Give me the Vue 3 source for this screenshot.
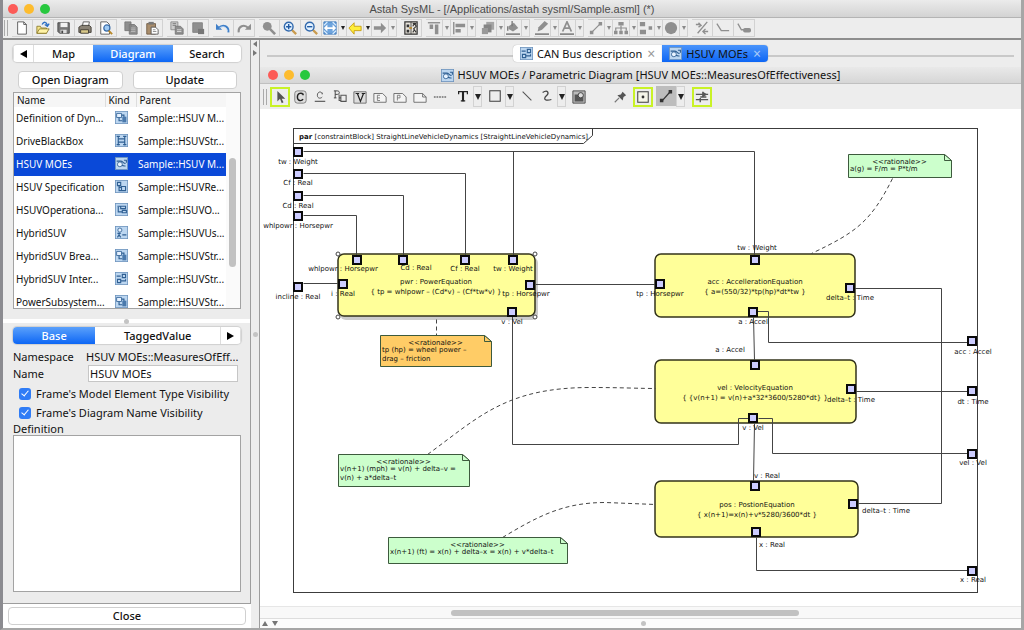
<script setup>
import { ref } from 'vue'

const blueTile = '<rect x=".5" y=".5" width="15" height="15" fill="#bcd6f0" stroke="#6d93bd"/>'
const tile = (d, extra = '') => `${blueTile}<path d="${d}" fill="none" stroke="#2f5f92" stroke-width="1.4"/>${extra}`
const gray = '#8f8f8f'

const icons = {
  new: '<path d="M3 1h7l3 3v11H3z" fill="#fff" stroke="#555"/><path d="M10 1v3h3" fill="none" stroke="#555"/>',
  open: '<path d="M1 14V6h4l1 2h6v6z" fill="#f5e58a" stroke="#8d7c2d"/><path d="M1 14l3-5h11l-3 5z" fill="#fff3a6" stroke="#8d7c2d"/><path d="M7 4c2-4 5-3 6 1M10 4l3 2 2-3" fill="none" stroke="#2c6fc4" stroke-width="1.6"/>',
  save: '<path d="M1 2h13v12H3l-2-2z" fill="#777" stroke="#444"/><path d="M4 2h8v5H4z" fill="#f2f2f2"/><path d="M4 10h7v4H4z" fill="#ddd"/><path d="M5 11h2v3H5z" fill="#444"/>',
  print: '<path d="M5 6l1-5h7l-1 5" fill="#fff" stroke="#555"/><path d="M1 7l3-2h9l2 2v6H1z" fill="#8a8376" stroke="#3c3831"/><path d="M3 10h9v4H3z" fill="#d9c98a" stroke="#3c3831"/>',
  preview: '<path d="M2 1h7l3 3v11H2z" fill="#fff" stroke="#555"/><circle cx="9" cy="8" r="3.5" fill="#9fcbf5" stroke="#3a6ca8" stroke-width="1.4"/><path d="M11 11l4 4" stroke="#b8892b" stroke-width="2.2"/>',
  copyGray: `<path d="M1 1h7v10H1zM6 4h6l3 3v8H6z" fill="${gray}" stroke="#777"/><path d="M8 8h5M8 10h5M8 12h5" stroke="#bbb"/>`,
  paste: '<path d="M2 3h10v12H2z" fill="#a98d6c" stroke="#705a44"/><path d="M4 1h6v3H4z" fill="#777"/><path d="M7 7h5l3 3v5H7z" fill="#fff" stroke="#555"/><path d="M9 10h3M9 12h4" stroke="#888"/>',
  copyStyle: `<path d="M1 1h8v9H1z" fill="#ccc" stroke="#888"/><path d="M3 3h4M3 5h4" stroke="#777"/><path d="M6 6h6l3 3v6H6z" fill="${gray}" stroke="#777"/><path d="M8 10h5M8 12h5" stroke="#ddd"/>`,
  pasteStyle: `<path d="M2 2h11v11H2z" fill="${gray}" stroke="#808080"/><path d="M8 9h7v6H8z" fill="#777"/>`,
  undo: '<path d="M14 13c1-7-6-10-11-5" fill="none" stroke="#3f7fc8" stroke-width="2.4"/><path d="M0 3v7h7z" fill="#3f7fc8"/><path d="M13 12c0-5-5-7-9-4" fill="none" stroke="#cfe4fa"/>',
  redo: `<path d="M2 13C1 6 8 3 13 8" fill="none" stroke="${gray}" stroke-width="2.4"/><path d="M16 3v7H9z" fill="${gray}"/>`,
  find: `<circle cx="6" cy="6" r="5" fill="${gray}"/><path d="M9 9l6 6" stroke="${gray}" stroke-width="3"/>`,
  zoomIn: '<path d="M10 10l5 5" stroke="#c99b4e" stroke-width="2.6"/><circle cx="6.500" cy="6.500" r="5" fill="#e2f1ff" stroke="#3269ad" stroke-width="1.6"/><path d="M3.500 6.500h6M6.500 3.500v6" stroke="#205ba5" stroke-width="1.600"/>',
  zoomOut: '<path d="M10 10l5 5" stroke="#c99b4e" stroke-width="2.6"/><circle cx="6.500" cy="6.500" r="5" fill="#e2f1ff" stroke="#3269ad" stroke-width="1.6"/><path d="M3.500 6.500h6" stroke="#205ba5" stroke-width="1.600"/>',
  fit: '<path d="M1 1h14v14H1z" fill="#6ea4dd" stroke="#3a76b8"/><path d="M1 5l4-4M11 1l4 4M1 11l4 4M11 15l4-4" stroke="#dff0ff" stroke-width="1.400"/><path d="M1 8l4-4v3h6V4l4 4-4 4V9H5v3z" fill="#fff"/>',
  back: '<path d="M1 8l6-6v4h8v5H7v4z" fill="#ffee3a" stroke="#c59b13"/>',
  forward: `<path d="M15 8L9 2v4H1v4h8v4z" fill="${gray}"/>`,
  map: '<path d="M1 1h14v14H1z" fill="#e8e4dc" stroke="#333" stroke-width="1.4"/><path d="M8 1v14" stroke="#444"/><path d="M3 4h3v3H3zM3 10h3v3H3z" fill="#333"/><path d="M10 6l2-3 2 3-3 3 3 4M10 13l2-3M10 3h4" fill="none" stroke="#333" stroke-width="1.200"/><path d="M6 8h3" stroke="#b8892b" stroke-width="2"/>',
  alignTop: `<path d="M1 2h14" stroke="${gray}" stroke-width="1.600"/><path d="M3 4h4v5H3zM9 4h4v11H9z" fill="${gray}"/>`,
  alignLeft: `<path d="M2 1v14" stroke="${gray}" stroke-width="1.600"/><path d="M4 3h11v4H4zM4 9h6v4H4z" fill="${gray}"/>`,
  depth: '<path d="M6 1h9v9H6z" fill="#a5a5a5"/><path d="M3 4h9v9H3z" fill="#858585"/><path d="M1 8h7v7H1z" fill="#999"/>',
  fill: `<path d="M3 6l6-4 5 6-6 4-5-3z" fill="${gray}"/><path d="M7 0v6M2 6v5" stroke="#777" stroke-width="1.500"/><path d="M0 15h16" stroke="#888" stroke-width="2"/>`,
  pen: `<path d="M3 12l1-5 7-7 4 3-7 7z" fill="${gray}"/><path d="M0 15h16" stroke="#888" stroke-width="2"/>`,
  fontColor: `<path d="M3 12L8 1l5 11M5 8h6" fill="none" stroke="${gray}" stroke-width="2"/><path d="M0 15h16" stroke="#888" stroke-width="2"/>`,
  lineStyle: `<path d="M3 13L13 3" stroke="${gray}" stroke-width="1.500"/><path d="M1 11h4v4H1zM11 1h4v4h-4z" fill="${gray}"/>`,
  tree: `<path d="M5 1h6v4H5zM0 11h4v4H0zM6 11h4v4H6zM12 11h4v4h-4z" fill="${gray}"/><path d="M8 5v6M2 11V8h12v3" fill="none" stroke="${gray}" stroke-width="1.400"/>`,
  arrange: `<path d="M1 1h6v5H1zM1 10h7v5H1zM11 6h4v4h-4z" fill="${gray}"/>`,
  disc: `<circle cx="8" cy="8" r="7" fill="${gray}"/>`,
  cut: `<path d="M14 1L3 14M1 4h5M9 12h6M4 2l3 3-3 2M12 9l-3 3 3 3" fill="none" stroke="${gray}" stroke-width="1.500"/>`,
  link: `<path d="M1 3l5 8h9" fill="none" stroke="${gray}" stroke-width="1.500"/>`,
  linkNote: `<path d="M1 3l4 7h4" fill="none" stroke="${gray}" stroke-width="1.500"/><rect x="7" y="8" width="9" height="5" rx="2" fill="${gray}"/>`,
  select: '<path d="M5 1v12l3-3 2 5 2-1-2-4h4z" fill="#555"/>',
  constraint: '<rect x="2" y="1" width="13" height="14" rx="3" fill="#ddd" stroke="#777"/><path d="M11.500 6V4M11.500 5C10 3 5 3 5 8s5 5 6.500 2.500" fill="none" stroke="#222" stroke-width="1.600"/>',
  constraintLine: '<path d="M10.500 5V3M10.500 4C9 1 5 2 5 6s4 4 5.500 2" fill="none" stroke="#555" stroke-width="1.100"/><path d="M2 13h12" stroke="#666" stroke-width="1.500"/>',
  port: '<path d="M1 9h3M2.500 9V1M1 1h4c3 0 3 4 0 4H2.500" fill="none" stroke="#444" stroke-width="1.100"/><path d="M9 9H7V5M7 9v3h2M9 6h6v7H9z" fill="none" stroke="#555" stroke-width="1.200"/>',
  value: '<path d="M1 2h14v13H1z" fill="#ddd" stroke="#666"/><path d="M5 4l3.500 9L12 4M3 4h4M10 4h4" fill="none" stroke="#222" stroke-width="1.400"/>',
  noteE: '<path d="M1 4h10l4 4v6H1z" fill="#f4f4f4" stroke="#666"/><path d="M8 6H5v6h3M5 9h3" fill="none" stroke="#777"/>',
  noteP: '<path d="M1 4h10l4 4v6H1z" fill="#f4f4f4" stroke="#666"/><path d="M5 12V6h3v3H5" fill="none" stroke="#777"/>',
  note: '<path d="M1 4h10l4 4v6H1z" fill="#f4f4f4" stroke="#666"/><path d="M11 4v4h4" fill="none" stroke="#666"/>',
  dotted: '<path d="M1 8h14" stroke="#333" stroke-width="1.400" stroke-dasharray="2 1"/>',
  text: '<path d="M3 6V3h10v3M5.500 13.500h5" fill="none" stroke="#222" stroke-width="1.400"/><path d="M8 3v11" stroke="#222" stroke-width="2.400"/>',
  rect: '<rect x="2" y="2" width="12" height="12" fill="#eee" stroke="#444" stroke-width="1.200"/>',
  line: '<path d="M3 3l10 10" stroke="#555" stroke-width="1.200"/>',
  curve: '<path d="M3 4c6-4 8 1 4 4-4 4 0 6 6 4" fill="none" stroke="#444" stroke-width="1.400"/>',
  image: '<path d="M1 1h14v14H1z" fill="#bbb" stroke="#444"/><path d="M3 13V5h4l1 4 5-2v6z" fill="#555"/><circle cx="10" cy="6" r="3" fill="#ddd" stroke="#333"/>',
  pin: '<path d="M2 14l5-5" stroke="#777" stroke-width="1.300"/><path d="M5 6l4-1 2-3 4 4-3 2-1 4z" fill="#555"/>',
  pointBox: '<rect x="2" y="2" width="12" height="12" fill="#f5f5e8" stroke="#444" stroke-width="1.200"/><circle cx="8" cy="8" r="1.600" fill="#333"/>',
  connector: '<path d="M4 13L12 4" stroke="#333" stroke-width="1.400"/><path d="M1 11h4v4H1zM11 1h4v4h-4z" fill="#333"/>',
  merge: '<path d="M1 5h14M1 11h14M6 8h7M9 2v6M6 9v5" stroke="#555" stroke-width="1.600"/><path d="M9 2l5 3-5 3z" fill="#555"/>',
  bdd: tile('M8 5h3v4M5 7v5h4', '<path d="M2 3h6v5H2z" fill="#e6f2ff" stroke="#2f5f92"/><path d="M9 7h5v7H9z" fill="#4a79ac"/>'),
  ibd: tile('M4 2v12M12 2v12M4 6h8v4H4zM2 3h4M10 3h4M2 13h4M10 13h4'),
  par: tile('M2 5h5c3 0 3 3 6 3M3 10c4-4 4 2 10 1M11 4h3v3', '<circle cx="6" cy="9" r="3" fill="#e8f3ff" stroke="#2f5f92"/>'),
  req: tile('M3 3h4v4H3zM5 7v6h3M5 9h3M8 8h5v5H8z'),
  act: tile('M3 4h4M7 4h6v3H7zM4 5v6h5M9 9h5v3H9z'),
  uc: tile('M5 8v3M3 9h4M5 11l-2 3M5 11l2 3M9 11h5', '<circle cx="6" cy="5" r="2.500" fill="#e8f3ff" stroke="#2f5f92"/>'),
  inter: tile('M2 5h5M9 3h4v4H9zM3 9h4v4H3zM7 11h6V9'),
}

const toolGroups = [
  [['new', 'New'], ['open', 'Open'], ['save', 'Save'], ['print', 'Print'], ['preview', 'Print preview']],
  [['copyGray', 'Copy'], ['paste', 'Paste']],
  [['copyStyle', 'Copy style'], ['pasteStyle', 'Paste style']],
  [['undo', 'Undo'], ['redo', 'Redo']],
  [['find', 'Find'], ['zoomIn', 'Zoom in'], ['zoomOut', 'Zoom out'], ['fit', 'Fit', 1], ['back', 'Back', 1], ['forward', 'Forward', 2]],
  [['map', 'Map view']],
  [['alignTop', 'Align top', 2], ['alignLeft', 'Align left', 2]],
  [['depth', 'Depth', 2], ['fill', 'Fill color', 2]],
  [['pen', 'Line color', 2], ['fontColor', 'Font color', 2]],
  [['lineStyle', 'Line style', 2], ['tree', 'Tree layout', 2], ['arrange', 'Arrange', 2], ['disc', 'Shape', 2]],
  [['cut', 'Cut line'], ['link', 'Link'], ['linkNote', 'Link note']],
]

const paletteGroups = [
  [['select', 'Select', 0, 'on'], ['constraint', 'Constraint'], ['constraintLine', 'Constraint parameter'], ['port', 'Port'], ['value', 'Value'], ['noteE', 'Element note'], ['noteP', 'Problem note'], ['note', 'Note'], ['dotted', 'Anchor']],
  [['text', 'Text', 1]],
  [['rect', 'Rectangle', 1]],
  [['line', 'Line'], ['curve', 'Curve', 1]],
  [['image', 'Image']],
  [['pin', 'Pin']],
  [['pointBox', 'Point', 0, 'on']],
  [['connector', 'Connector', 1, 'down']],
  [['merge', 'Merge', 0, 'on']],
]

const rows = [
  ['Definition of Dyn...', 'bdd', 'Sample::HSUV M...'],
  ['DriveBlackBox', 'ibd', 'Sample::HSUVStr...'],
  ['HSUV MOEs', 'par', 'Sample::HSUV M...'],
  ['HSUV Specification', 'req', 'Sample::HSUVRe...'],
  ['HSUVOperationa...', 'act', 'Sample::HSUVO...'],
  ['HybridSUV', 'uc', 'Sample::HSUVUs...'],
  ['HybridSUV Brea...', 'bdd', 'Sample::HSUVStr...'],
  ['HybridSUV Inter...', 'inter', 'Sample::HSUVStr...'],
  ['PowerSubsystem...', 'bdd', 'Sample::HSUVStr...'],
]
const selected = ref(2)
const name = ref('HSUV MOEs')
const typeVisible = ref(true)
const nameVisible = ref(true)
const definition = ref('')

const blocks = [
  [655, 254, 200, 63],
  [655, 360, 201, 63],
  [655, 481, 203, 56],
]
const wires = [
  'M303 151H754V255', 'M513 151V255', 'M303 173H465V255', 'M303 195H403V255', 'M303 215H356V255',
  'M303 283H338', 'M512 316V444H738V418H749', 'M535 284H655', 'M753 316L754 360',
  'M757 311H768V342H967', 'M854 288H941V503H857', 'M855 391H967', 'M758 418H772V453H967',
  'M754 423L753 481', 'M756 537V570H967',
]
const anchors = [
  'M892 178C870 222 855 232 811 253',
  'M427 454C478 417 505 387 590 387C620 387 640 388 655 388',
  'M502 537C540 514 565 502 605 502L655 504',
  'M436 319V335',
]
const ports = [
  [298, 152], [298, 174], [298, 196], [298, 216], [298, 287],
  [357, 260], [403, 260], [465, 260], [513, 260], [343, 284], [530, 285], [512, 312],
  [755, 260], [660, 284], [850, 288], [753, 312],
  [755, 365], [851, 389], [753, 418],
  [755, 486], [853, 504], [756, 532],
  [972, 341], [972, 391], [972, 454], [972, 571],
]
const labels = [
  [298, 164, 'tw : Weight'], [298, 185, 'Cf : Real'], [298, 208, 'Cd : Real'], [298, 228, 'whlpowr : Horsepwr'],
  [298, 299, 'incline : Real'], [343, 271, 'whlpowr : Horsepwr'], [416, 270, 'Cd : Real'], [465, 271, 'Cf : Real'],
  [513, 271, 'tw : Weight'], [436, 284, 'pwr : PowerEquation'], [436, 294, '{ tp = whlpowr – (Cd*v) – (Cf*tw*v) }'],
  [343, 296, 'i : Real'], [526, 296, 'tp : Horsepwr'], [512, 324, 'v : Vel'],
  [757, 250, 'tw : Weight'], [660, 296, 'tp : Horsepwr'], [755, 284, 'acc : AccellerationEquation'],
  [755, 294, '{ a=(550/32)*tp(hp)*dt*tw }'], [850, 300, 'delta–t : Time'], [753, 324, 'a : Accel'],
  [730, 352, 'a : Accel'], [973, 354, 'acc : Accel'],
  [755, 390, 'vel : VelocityEquation'], [755, 400, '{ {v(n+1) = v(n)+a*32*3600/5280*dt} }'],
  [851, 402, 'delta–t : Time'], [753, 430, 'v : Vel'], [973, 404, 'dt : Time'], [973, 465, 'vel : Vel'],
  [767, 478, 'v : Real'], [757, 507, 'pos : PostionEquation'], [757, 517, '{ x(n+1)=x(n)+v*5280/3600*dt }'],
  [886, 513, 'delta–t : Time'], [772, 547, 'x : Real'], [973, 582, 'x : Real'],
]
const notes = [
  { x: 848, y: 154, w: 103, h: 23, fill: '#ccffcc', lines: ['a(g) = F/m = P*t/m'] },
  { x: 380, y: 335, w: 111, h: 31, fill: '#ffcc66', lines: ['tp (hp) = wheel power –', 'drag – friction'] },
  { x: 338, y: 454, w: 131, h: 32, fill: '#ccffcc', lines: ['v(n+1) (mph) = v(n) + delta–v =', 'v(n) + a*delta–t'] },
  { x: 388, y: 537, w: 179, h: 26, fill: '#ccffcc', lines: ['x(n+1) (ft) = x(n) + delta–x = x(n) + v*delta–t'] },
]
</script>

<template>
  <div class="window">
    <header class="titlebar">
      <span class="lights"><i class="red"></i><i class="amber"></i><i class="green"></i></span>
      <h1>Astah SysML - [/Applications/astah sysml/Sample.asml] (*)</h1>
    </header>

    <nav class="toolbar" aria-label="Main tools">
      <span class="grip"></span>
      <div v-for="(group, g) in toolGroups" :key="g" class="group">
        <template v-for="tool in group" :key="tool[0]">
          <button class="tool" :class="{ narrow: tool[2] }" :aria-label="tool[1]">
            <svg viewBox="0 0 16 16" v-html="icons[tool[0]]"></svg>
          </button>
          <button v-if="tool[2]" class="drop" :class="{ dim: tool[2] === 2 }" :aria-label="tool[1] + ' options'"></button>
        </template>
      </div>
    </nav>

    <div class="body">
      <aside class="side">
        <div class="panel">
          <section class="browser">
            <div class="segments">
              <button class="arrow" aria-label="Previous tab"><i class="tri left"></i></button>
              <button class="map">Map</button>
              <button class="active diagram">Diagram</button>
              <button class="search">Search</button>
            </div>
            <div class="actions">
              <button>Open Diagram</button>
              <button>Update</button>
            </div>
            <div class="listing">
              <div class="rows">
                <table>
                  <thead>
                    <tr><th>Name</th><th>Kind</th><th>Parent</th></tr>
                  </thead>
                  <tbody>
                    <tr v-for="(row, r) in rows" :key="row[0]" :class="{ chosen: r === selected }" @click="selected = r">
                      <td>{{ row[0] }}</td>
                      <td><svg viewBox="0 0 16 16" v-html="icons[row[1]]"></svg></td>
                      <td>{{ row[2] }}</td>
                    </tr>
                  </tbody>
                </table>
              </div>
              <div class="vtrack"><span></span></div>
            </div>
          </section>
          <div class="hsplit"><i></i></div>
          <section class="props">
            <div class="segments">
              <button class="active base">Base</button>
              <button class="tagged">TaggedValue</button>
              <button class="arrow" aria-label="Next tab"><i class="tri right"></i></button>
            </div>
            <div class="fields">
              <span>Namespace</span><span class="ns">HSUV MOEs::MeasuresOfEff...</span>
              <label for="name">Name</label><input id="name" v-model="name" type="text">
            </div>
            <label class="check"><input v-model="typeVisible" type="checkbox">Frame's Model Element Type Visibility</label>
            <label class="check"><input v-model="nameVisible" type="checkbox">Frame's Diagram Name Visibility</label>
            <label class="deflabel" for="definition">Definition</label>
            <textarea id="definition" v-model="definition"></textarea>
          </section>
        </div>
        <div class="closebar"><button>Close</button></div>
      </aside>

      <div class="vsplit"><i class="tri tiny left"></i><i class="tri tiny right"></i><b></b></div>

      <main class="main">
        <div class="doctabs">
          <div class="doctab">
            <button><svg viewBox="0 0 16 16" v-html="icons.inter"></svg>CAN Bus description</button>
            <button class="x" aria-label="Close CAN Bus description">×</button>
          </div>
          <div class="doctab current">
            <button><svg viewBox="0 0 16 16" v-html="icons.par"></svg>HSUV MOEs</button>
            <button class="x" aria-label="Close HSUV MOEs">×</button>
          </div>
        </div>

        <div class="subtitle">
          <span class="lights"><i class="red"></i><i class="amber"></i><i class="green"></i></span>
          <h2><svg viewBox="0 0 16 16" v-html="icons.par"></svg>HSUV MOEs / Parametric Diagram [HSUV MOEs::MeasuresOfEffectiveness]</h2>
        </div>

        <nav class="palette" aria-label="Diagram tools">
          <span class="grip"></span>
          <div v-for="(group, g) in paletteGroups" :key="g" class="group">
            <template v-for="tool in group" :key="tool[0]">
              <button class="tool" :class="tool[3]" :aria-label="tool[1]">
                <svg viewBox="0 0 16 16" v-html="icons[tool[0]]"></svg>
              </button>
              <button v-if="tool[2]" class="drop" :aria-label="tool[1] + ' options'"></button>
            </template>
          </div>
        </nav>

        <div class="canvas">
          <svg class="diagram-art" width="760" height="494" viewBox="260 109 760 494" role="img" aria-label="Parametric diagram">
            <g fill="none" stroke="#3c3c3c" transform="translate(.5 .5)">
              <rect x="293" y="128" width="684" height="464" />
              <path d="M293 143H583L592 135V128" />
            </g>
            <g>
              <rect x="340" y="257" width="198" height="63" rx="6" fill="#ccc" />
              <rect x="338" y="254" width="197" height="62" rx="6" class="block" />
              <rect v-for="b in blocks" :key="b[1]" :x="b[0]" :y="b[1]" :width="b[2]" :height="b[3]" rx="6" class="block" />
            </g>
            <g fill="none" stroke="#444" transform="translate(.5 .5)">
              <path v-for="w in wires" :key="w" :d="w" />
              <path v-for="a in anchors" :key="a" :d="a" stroke-dasharray="4 3" />
            </g>
            <rect v-for="(p, i) in ports" :key="i" :x="p[0] - 4" :y="p[1] - 4" width="8" height="8" class="port" />
            <g v-for="n in notes" :key="n.y">
              <g stroke="#3d5a3d" transform="translate(.5 .5)">
                <path :d="`M${n.x} ${n.y}h${n.w - 7}l7 6v${n.h - 6}h${-n.w}z`" :fill="n.fill" />
                <path :d="`M${n.x + n.w - 7} ${n.y}v6h7z`" :fill="n.fill" />
              </g>
              <text :x="n.x + n.w / 2" :y="n.y + 10" text-anchor="middle">&lt;&lt;rationale&gt;&gt;</text>
              <text v-for="(l, i) in n.lines" :key="l" :x="n.x + 2" :y="n.y + 17 + i * 9">{{ l }}</text>
            </g>
            <g fill="#fff" stroke="#444">
              <circle cx="338" cy="254" r="2" /><circle cx="535" cy="254" r="2" />
              <circle cx="338" cy="317" r="2" /><circle cx="535" cy="317" r="2" />
            </g>
            <text x="299" y="139"><tspan font-weight="bold">par</tspan> [constraintBlock] StraightLineVehicleDynamics [StraightLineVehicleDynamics]</text>
            <text v-for="(l, i) in labels" :key="i" :x="l[0]" :y="l[1]" text-anchor="middle">{{ l[2] }}</text>
          </svg>
        </div>
        <div class="hscroll"><span></span></div>
        <footer class="foot"><i class="tri tiny up"></i><i class="tri tiny down"></i><b></b></footer>
      </main>
    </div>
  </div>
</template>

<style>
html, body { margin: 0; overflow: hidden; }
</style>

<style scoped>
* { box-sizing: border-box; }
.window { display: flex; flex-direction: column; height: 100vh; border: solid #a6a6a6; border-width: 0 3px 2px; border-left-color: #8b8b90; background: #ededed; font: 11px/16px "Noto Sans", "Open Sans", sans-serif; color: #111; }
button { border: 0; padding: 0; margin: 0; background: none; color: inherit; font: inherit; }
svg { display: block; }
h1, h2 { margin: 0; font: inherit; }
.titlebar { position: relative; flex: none; height: 18px; background: linear-gradient(#ebebeb, #d3d3d3); border-bottom: 1px solid #b4b4b4; text-align: center; }
.titlebar h1 { font: 11px/18px "Liberation Sans", sans-serif; color: #4c4c4c; }
.lights { position: absolute; left: 5px; top: 4px; display: flex; gap: 6px; }
.lights i { width: 10px; height: 10px; border-radius: 50%; }
.red { background: #fc5b57; }
.amber { background: #fdbc2e; }
.green { background: #28c83f; }

.toolbar { flex: none; display: flex; align-items: center; gap: 4px; height: 22px; padding-left: 1px; border-bottom: 2px solid #8e8e8e; }
.grip { width: 4px; height: 16px; border: solid #aaa; border-width: 0 1px; }
.group { display: flex; }
.tool { display: flex; align-items: center; justify-content: center; width: 21px; height: 18px; border: solid #d2d2d2; border-width: 1px 1px 1px 0; }
.tool svg { flex: none; width: 14px; height: 14px; }
.tool.narrow { width: 17px; }
.drop { width: 8px; height: 18px; border: solid #d2d2d2; border-width: 1px 1px 1px 0; }
.drop::before { content: ""; display: block; margin: 0 auto; width: 0; border: 2px solid transparent; border-top: 4px solid #222; border-bottom: 0; }
.drop.dim::before { border-top-color: #8a8a8a; }

.body { flex: 1; min-height: 0; display: flex; }
.side { flex: none; width: 248px; display: flex; flex-direction: column; background: #fff; }
.panel { flex: 1; min-height: 0; display: flex; flex-direction: column; background: #ececec; border: solid #9d9d9d; border-width: 0 1px 1px 0; }
.browser { padding: 5px 9px 10px 10px; }
.segments { display: flex; height: 17px; border-radius: 4px; background: #fff; box-shadow: 0 0 1px 1px #d0d0d0; overflow: hidden; line-height: 17px; font-weight: 500; }
.segments .active { background: linear-gradient(#5ba1fb, #0d66f5); color: #fff; }
.arrow { flex: none; display: flex; align-items: center; justify-content: center; width: 21px; border: solid #ddd; border-width: 0 1px; }
.map { flex: 59; } .diagram { flex: 80; } .search { flex: 68; }
.base { flex: 82; } .tagged { flex: 124; }
.tri { width: 0; height: 0; border: 4px solid transparent; }
.tri.left { border-right: 7px solid #000; border-left: 0; }
.tri.right { border-left: 7px solid #000; border-right: 0; }
.tiny { border-width: 3px; }
.tiny.left { border-right: 4px solid #777; border-left: 0; }
.tiny.right { border-left: 4px solid #777; border-right: 0; }
.tiny.up { border-bottom: 5px solid #777; border-top: 0; }
.tiny.down { border-top: 5px solid #777; border-bottom: 0; }
.actions { display: grid; grid-template-columns: 1fr 1fr; gap: 10px; padding: 9px 4px 3px 5px; }
.actions button, .closebar button { height: 18px; line-height: 16px; border: 1px solid #d0d0d0; border-radius: 4px; background: #fff; font-weight: 500; }
.listing { display: flex; height: 217px; overflow: hidden; border: 1px solid #a3a3a3; background: #fff; }
.rows { flex: 1; min-width: 0; overflow: hidden; }
table { width: 100%; table-layout: fixed; border-collapse: collapse; text-align: left; white-space: nowrap; font-size: 10px; }
th { height: 14px; padding: 0 0 0 3px; font-weight: inherit; line-height: 13px; background: #f6f6f6; }
th:nth-child(1) { width: 91px; } th:nth-child(2) { width: 31px; }
th + th { border-left: 1px solid #ddd; }
td { height: 23px; padding: 0 0 2px 2px; overflow: hidden; }
td svg { width: 13px; height: 13px; margin-left: 8px; }
.chosen { background: #0a49d8; color: #fff; }
.vtrack { flex: none; width: 14px; padding: 65px 3px 0; background: #fafafa; }
.vtrack span { display: block; width: 7px; height: 109px; border-radius: 4px; background: #c1c1c1; }
.hsplit { flex: none; display: flex; justify-content: center; align-items: center; height: 4px; background: #fff; }
.hsplit i, .vsplit b, .foot b { width: 5px; height: 5px; border-radius: 50%; background: #c4c4c4; }
.props { flex: 1; min-height: 0; display: flex; flex-direction: column; padding: 4px 9px 11px 10px; }
.fields { display: grid; grid-template-columns: 73px minmax(0, 1fr); align-items: center; padding: 5px 3px 0 0; }
.ns { white-space: nowrap; }
#name { width: auto; min-width: 0; height: 17px; margin-left: 2px; padding: 0 1px; border: 1px solid #c6c6c6; background: #fff; font: inherit; color: inherit; }
.check { display: flex; align-items: center; gap: 5px; height: 19px; padding-left: 6px; white-space: nowrap; }
.fields + .check { margin-top: 2px; }
.check input { appearance: none; width: 12px; height: 12px; margin: 0; border-radius: 3px; background: #2f7cf6; display: grid; place-items: center; }
.check input:checked::before { content: ""; width: 3px; height: 6px; margin-bottom: 2px; border: solid #fff; border-width: 0 1px 1px 0; transform: rotate(40deg); }
.deflabel { line-height: 13px; }
textarea { flex: 1; min-height: 0; resize: none; border: 1px solid #a3a3a3; background: #fff; font: inherit; }
.closebar { flex: none; height: 24px; padding: 3px 5px 0; }
.closebar button { width: 100%; }

.vsplit { flex: none; position: relative; width: 9px; border-right: 1px solid #9d9d9d; }
.vsplit i { display: block; margin: 1px 2px 3px; }
.vsplit b { position: absolute; left: 2px; top: 292px; }

.main { flex: 1; min-width: 0; display: flex; flex-direction: column; }
.doctabs { flex: none; display: flex; justify-content: center; height: 27px; padding: 5px 7px; background: linear-gradient(#c9c9c9, #c9c9c9) center 15px / calc(100% - 14px) 2px no-repeat; }
.doctab { display: flex; height: 17px; padding: 0 7px; gap: 5px; background: #fff; border-radius: 4px 0 0 4px; line-height: 15px; box-shadow: 0 0 1px #999; }
.doctab button:first-child { display: flex; align-items: center; gap: 4px; }
.doctab svg { width: 13px; height: 13px; }
.doctab .x { color: #999; font-size: 14px; }
.doctab.current { background: linear-gradient(#4a94fb, #0d66f5); border-radius: 0 4px 4px 0; }
.current .x { color: #a9c9f8; }
.subtitle { flex: none; position: relative; height: 17px; background: linear-gradient(#e9e9e9, #d6d6d6); border-bottom: 1px solid #c0c0c0; }
.subtitle .lights { left: 8px; top: 3px; }
.subtitle h2 { display: flex; justify-content: center; align-items: center; gap: 4px; line-height: 16px; white-space: nowrap; }
.subtitle svg { width: 13px; height: 13px; }
.palette { flex: none; display: flex; align-items: center; gap: 3px; height: 25px; padding-left: 3px; }
.palette .tool { width: 20px; height: 20px; border: 0; }
.palette .tool.on { border: 2px solid #c9f227; }
.palette .tool.down { background: #bdbdbd; }
.palette .drop { width: 9px; height: 21px; border-width: 1px; }
.palette .drop::before { border-width: 6px 3px 0; }
.palette .group:nth-child(7) { margin-left: 18px; }
.palette .group:nth-child(10) { margin-left: 4px; }
.canvas { flex: 1; min-height: 0; overflow: hidden; background: #fff; }
.block { fill: #ffff99; stroke: #33331a; stroke-width: 1.5; }
.port { fill: #ccccff; stroke: #0a0a0a; stroke-width: 2; }
.diagram-art text { font: 7px "DejaVu Sans", sans-serif; fill: #111; }
.diagram-art tspan { font-weight: bold; }
.hscroll { flex: none; height: 12px; padding: 3px 222px 3px 191px; background: #f8f8f8; border-top: 1px solid #e6e6e6; }
.hscroll span { display: block; height: 6px; border-radius: 3px; background: #c1c1c1; }
.foot { flex: none; position: relative; display: flex; align-items: center; gap: 4px; height: 10px; padding-left: 2px; background: #fcfcfc; border-top: 1px solid #ddd; }
.foot b { position: absolute; left: 50%; }
</style>
